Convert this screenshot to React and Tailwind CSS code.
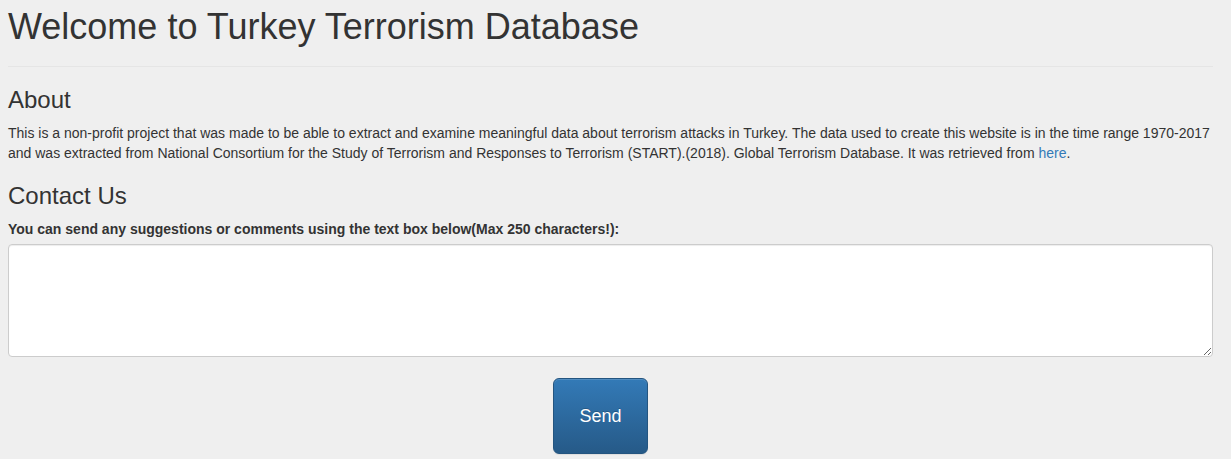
import React, { useState } from "react";

function App() {
  const [message, setMessage] = useState("");

  return (
    <div
      className="min-h-[459px] bg-[#efefef] text-[#333333] pl-[8px] pr-[18px] pt-[7px]"
      style={{ fontFamily: '"Liberation Sans", Arial, sans-serif' }}
    >
      {/* Page header */}
      <div className="pb-[9px] border-b border-[#e5e5e5]">
        <h1 className="text-[36px] leading-[40px] mb-[10px]">
          Welcome to Turkey Terrorism Database
        </h1>
      </div>

      {/* About */}
      <h3 className="text-[24px] leading-[26px] mt-[20px] mb-[10px]">About</h3>
      <p className="text-[14px] leading-[20px]">
        This is a non-profit project that was made to be able to extract and
        examine meaningful data about terrorism attacks in Turkey. The data used
        to create this website is in the time range 1970-2017 and was extracted
        from National Consortium for the Study of Terrorism and Responses to
        Terrorism (START).(2018). Global Terrorism Database. It was retrieved
        from{" "}
        <span className="whitespace-nowrap">
          <a href="#" className="text-[#337ab7]">here</a>.
        </span>
      </p>

      {/* Contact */}
      <h3 className="text-[24px] leading-[26px] mt-[20px] mb-[10px]">
        Contact Us
      </h3>
      <label className="block text-[14px] leading-[20px] font-bold mb-[5px]">
        You can send any suggestions or comments using the text box below(Max
        250 characters!):
      </label>
      <textarea
        maxLength={250}
        value={message}
        onChange={(e) => setMessage(e.target.value)}
        className="block w-[1205px] h-[113px] bg-white border border-[#cccccc] rounded-[4px] shadow-[inset_0_1px_1px_rgba(0,0,0,0.075)] px-3 py-1.5 text-[14px] outline-none"
      />

      <div className="pl-[545px] pt-[21px]">
        <button className="w-[95px] h-[76px] rounded-[6px] border border-[#245580] bg-gradient-to-b from-[#337ab7] to-[#265a88] text-white text-[18px] [text-shadow:0_-1px_0_rgba(0,0,0,0.2)] shadow-[inset_0_1px_0_rgba(255,255,255,0.15),0_1px_1px_rgba(0,0,0,0.075)]">
          Send
        </button>
      </div>
    </div>
  );
}

export default App;
